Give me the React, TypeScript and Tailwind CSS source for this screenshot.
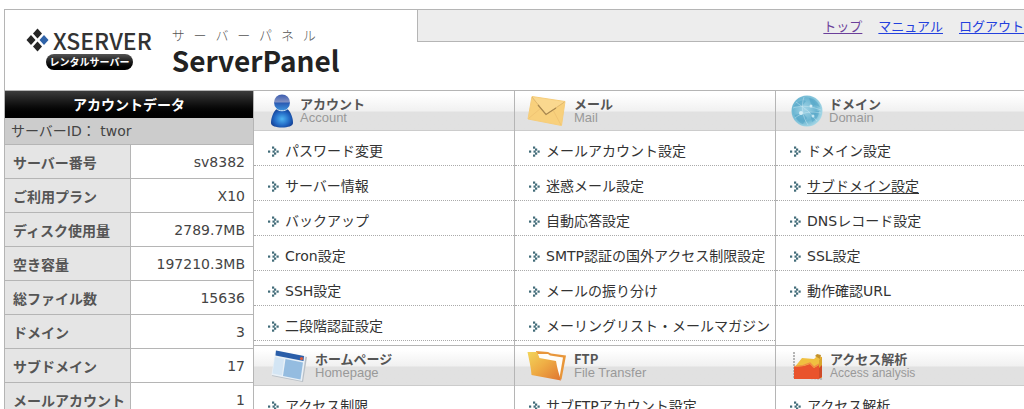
import React from 'react';

type Row = { label: string; value: string };
type Section = { title: string; sub: string; icon: React.ReactNode; pad: string; subStyle: string; links: string[] };

const accountRows: Row[] = [
    { label: 'サーバー番号', value: 'sv8382' },
    { label: 'ご利用プラン', value: 'X10' },
    { label: 'ディスク使用量', value: '2789.7MB' },
    { label: '空き容量', value: '197210.3MB' },
    { label: '総ファイル数', value: '15636' },
    { label: 'ドメイン', value: '3' },
    { label: 'サブドメイン', value: '17' },
    { label: 'メールアカウント', value: '1' },
];

const AccountIcon = () => (
    <svg width="24" height="36" viewBox="0 0 24 36" className="shrink-0" aria-hidden="true">
        <defs>
            <radialGradient id="body" cx="50%" cy="55%" r="58%">
                <stop offset="0" stopColor="#4fb4f2" />
                <stop offset="0.6" stopColor="#2268c4" />
                <stop offset="1" stopColor="#123a8c" />
            </radialGradient>
            <linearGradient id="head" x1="0" y1="0" x2="0" y2="1">
                <stop offset="0" stopColor="#3a5cb0" />
                <stop offset="0.45" stopColor="#8190c2" />
                <stop offset="0.55" stopColor="#2b5db5" />
                <stop offset="1" stopColor="#3e93dd" />
            </linearGradient>
        </defs>
        <path d="M7 15.500C3 19 1 25 1 30c0 3 5 4.500 11 4.500S23 33 23 30c0-5-2-11-6-14.500-3 1.500-7 1.500-10 0z" fill="url(#body)" />
        <circle cx="12" cy="9.500" r="8" fill="url(#head)" />
        <path d="M6 15.500c3 3 9 3 12 0" fill="none" stroke="#d5ebfa" strokeWidth="1" />
    </svg>
);

const MailIcon = () => (
    <svg width="40" height="32" viewBox="0 0 40 32" className="shrink-0" aria-hidden="true">
        <path d="M5 1.500L38 6.500 34.500 30.500 1 24z" fill="#f8d07c" stroke="#f6cd7b" strokeWidth="1" />
        <path d="M1.500 23.500L14 13M34 30L26.500 16" stroke="#f0c473" strokeWidth="1" />
        <path d="M5 2L19 19.500 37.500 7z" fill="#fad88f" />
        <path d="M5 2L19 19.500 37.500 7" fill="none" stroke="#d9b066" strokeWidth="0.800" />
        <path d="M11 10L19 19.500 29 13" fill="none" stroke="#a98850" strokeWidth="1.200" />
    </svg>
);

const DomainIcon = () => (
    <svg width="32" height="32" viewBox="0 0 32 32" className="shrink-0" aria-hidden="true">
        <defs>
            <radialGradient id="globe" cx="42%" cy="45%" r="58%">
                <stop offset="0" stopColor="#a3d4e6" />
                <stop offset="0.65" stopColor="#6cb6d2" />
                <stop offset="1" stopColor="#a5d7e6" />
            </radialGradient>
        </defs>
        <circle cx="16" cy="16" r="15.500" fill="url(#globe)" />
        <path d="M3 11c4-5 9-7 12-5l-4 5-5 1zM18 3c5 0 9 4 11 9l-5-2-3 2zM4 20l8-2 4 5-4 6c-4-1-7-5-8-9zM19 17l9-1c0 5-3 9-7 11z" fill="#4ba0c4" opacity="0.500" />
        <path d="M2 13c8-3 18-2 28 2M4 23c7-6 16-7 26-5M13 2c-3 9-2 19 4 28M5 7l12 9 9 10" fill="none" stroke="#d9f0f7" strokeWidth="0.800" opacity="0.500" />
        <circle cx="10" cy="18" r="2" fill="#d5eef6" />
        <circle cx="20" cy="11" r="1.500" fill="#d5eef6" />
        <circle cx="22" cy="21" r="1.500" fill="#c4e6f1" />
    </svg>
);

const HomepageIcon = () => (
    <svg width="36" height="34" viewBox="0 0 36 34" className="shrink-0" aria-hidden="true">
        <path d="M5 2L36 8 32 33 1 27z" fill="#b8bfc6" />
        <path d="M4.500 1.500L34.500 7.500 31 32 0.500 26z" fill="#e8f0f7" />
        <path d="M5 1.500L33 7 32.500 12 4.500 6.500z" fill="#2a5ea9" />
        <circle cx="30.500" cy="9.500" r="1.600" fill="#e05a3a" />
        <path d="M4 8L13 10 11 26.500 1.500 24.500z" fill="#d3e5f4" />
        <path d="M14.500 10L32 13.500 29.500 30.500 12 27z" fill="#94bce0" />
    </svg>
);

const FtpIcon = () => (
    <svg width="40" height="32" viewBox="0 0 40 32" className="shrink-0" aria-hidden="true">
        <defs>
            <linearGradient id="folder" x1="0" y1="0" x2="1" y2="1">
                <stop offset="0" stopColor="#f2d55c" />
                <stop offset="0.45" stopColor="#efae45" />
                <stop offset="1" stopColor="#df7430" />
            </linearGradient>
        </defs>
        <path d="M9 1l12 1 3 1.500 15 2-4.500 24L12 22z" fill="#e8963a" />
        <path d="M11 4l10 0 2 1.500 13 2-3.500 20-20-8z" fill="#fffdf8" />
        <path d="M0.500 2l9.500 0 2.500 6L29 11c1 7 3 13 5 19.500L4.500 25C4 17 2 10 0.500 2z" fill="url(#folder)" />
    </svg>
);

const AnalysisIcon = () => (
    <svg width="32" height="30" viewBox="0 0 32 30" className="shrink-0" aria-hidden="true">
        <path d="M2 1v25l29 2" fill="none" stroke="#b5b5b5" strokeWidth="2" strokeDasharray="2 1" />
        <path d="M2 17L10 7l12 1 3-3 5 1v21l-28-1z" fill="#f0c040" />
        <path d="M23 5l2-2 4 1-1 4z" fill="#c4922b" />
        <path d="M2 16l10-1 6-2 4 4 5-3v14H2z" fill="#e9532c" />
        <path d="M2 15.500l9-1 7-2.500 4 4 5-3" fill="none" stroke="#f08a47" strokeWidth="1.200" />
        <path d="M27 13l3-7v20l-3 2z" fill="#cf4a28" />
        <path d="M27 9l3-3v8l-3 3z" fill="#d9a52e" />
    </svg>
);

const sections: Section[] = [
    {
        title: 'アカウント',
        sub: 'Account',
        icon: <AccountIcon />,
        pad: 'pl-4 gap-1.5',
        subStyle: 'text-[13px]',
        links: ['パスワード変更', 'サーバー情報', 'バックアップ', 'Cron設定', 'SSH設定', '二段階認証設定'],
    },
    {
        title: 'メール',
        sub: 'Mail',
        icon: <MailIcon />,
        pad: 'pl-3 gap-[7px]',
        subStyle: 'text-[13px]',
        links: ['メールアカウント設定', '迷惑メール設定', '自動応答設定', 'SMTP認証の国外アクセス制限設定', 'メールの振り分け', 'メーリングリスト・メールマガジン'],
    },
    {
        title: 'ドメイン',
        sub: 'Domain',
        icon: <DomainIcon />,
        pad: 'pl-[15px] gap-1.5',
        subStyle: 'text-[13px]',
        links: ['ドメイン設定', 'サブドメイン設定', 'DNSレコード設定', 'SSL設定', '動作確認URL'],
    },
    { title: 'ホームページ', sub: 'Homepage', icon: <HomepageIcon />, pad: 'pl-[17px] gap-2', subStyle: 'text-[13px]', links: ['アクセス制限'] },
    { title: 'FTP', sub: 'File Transfer', icon: <FtpIcon />, pad: 'pl-3 gap-[7px]', subStyle: 'text-[13px]', links: ['サブFTPアカウント設定'] },
    { title: 'アクセス解析', sub: 'Access analysis', icon: <AnalysisIcon />, pad: 'pl-4 gap-1.5', subStyle: 'text-[12px]', links: ['アクセス解析'] },
];

const Bullet = () => (
    <svg width="11" height="11" viewBox="0 0 11 11" className="shrink-0" fill="#416b78" aria-hidden="true">
        <rect x="0" y="4.500" width="2.200" height="2.200" />
        <rect x="4" y="0.500" width="2.200" height="2.200" />
        <rect x="6" y="2.500" width="2.200" height="2.200" />
        <rect x="8.500" y="4.500" width="2.200" height="2.200" />
        <rect x="6" y="6.500" width="2.200" height="2.200" />
        <rect x="4" y="8.500" width="2.200" height="2.200" />
        <rect x="4.500" y="4.500" width="2.200" height="2.200" />
    </svg>
);

const Logo = () => (
    <div className="flex flex-col gap-0.5 pt-[18px]">
        <div className="flex items-center gap-1">
            <svg width="23" height="24" viewBox="0 0 23 24" aria-hidden="true">
                <path d="M11.500 0.500l4.500 5-4.500 5-4.500-5z" fill="#262626" />
                <path d="M5 7l4.500 5L5 17 0.500 12z" fill="#262626" />
                <path d="M18 7l4.500 5-4.500 5-4.500-5z" fill="#2f63a8" />
                <path d="M11.500 13.500l4.500 5-4.500 5-4.500-5z" fill="#262626" />
            </svg>
            <span className="text-[23px] leading-6 font-medium text-[#333]">XSERVER</span>
        </div>
        <span className="ml-5 flex h-4 w-[87px] items-center justify-center rounded-full bg-linear-to-b from-[#555] to-black text-[10px] leading-4 font-bold text-white">
            レンタルサーバー
        </span>
    </div>
);

const SectionPanel: React.FC<Section> = ({ title, sub, icon, pad, subStyle, links }) => (
    <section className="border-b border-[#b5b5b5] pb-1 not-nth-[3n]:border-r">
        <div className={`flex h-10 items-center border-b border-[#ccc] bg-linear-to-b from-white from-10% via-[#f1f1f1] via-50% to-[#e1e1e1] to-55% ${pad}`}>
            {icon}
            <div>
                <h2 className="text-[13px] leading-[14px] font-bold text-[#555]">{title}</h2>
                <p className={`font-['Liberation_Sans','Noto_Sans_CJK_JP',sans-serif] leading-[14px] text-[#999] ${subStyle}`}>{sub}</p>
            </div>
        </div>
        <ul>
            {links.map((link) => (
                <li key={link} className="flex h-[35px] items-center gap-1.5 border-b border-dotted border-[#aaa] pt-1.5 pl-3.5">
                    <Bullet />
                    <a
                        href="#"
                        className={`font-['DejaVu_Sans','Noto_Sans_CJK_JP',sans-serif] text-[14px] leading-5 whitespace-nowrap text-[#333] hover:underline ${link === 'サブドメイン設定' ? 'underline underline-offset-2' : ''}`}
                    >
                        {link}
                    </a>
                </li>
            ))}
        </ul>
    </section>
);

export default function App() {
    return (
        <div className="h-screen overflow-hidden bg-white pt-[9px] pl-1 font-['Noto_Sans_CJK_JP',sans-serif]">
            <div className="border-t border-l border-[#b5b5b5]">
                <header className="flex h-[81px] items-start border-b border-[#b5b5b5]">
                    <div className="flex w-[412px] shrink-0 pl-[21px]">
                        <Logo />
                        <div className="pt-4 pl-5">
                            <p className="flex w-36 justify-between text-[13px] leading-[18px] font-light text-[#555]">
                                {[...'サーバーパネル'].map((char, i) => (
                                    <span key={i}>{char}</span>
                                ))}
                            </p>
                            <h1 className="text-[28px] leading-8 font-bold text-[#222]">ServerPanel</h1>
                        </div>
                    </div>
                    <nav className="flex h-8 flex-1 items-center justify-end gap-4 border-b border-l border-[#b5b5b5] bg-[#ededed] text-[13px] leading-5 whitespace-nowrap text-[#2340dd]">
                        <a href="#" className="text-[#6b3f9a] underline underline-offset-2">トップ</a>
                        <a href="#" className="underline underline-offset-2">マニュアル</a>
                        <a href="#" className="underline underline-offset-2">ログアウト</a>
                    </nav>
                </header>

                <div className="flex items-start">
                    <aside className="w-[249px] shrink-0 border-r border-[#b5b5b5] text-[14px] leading-5 text-[#444]">
                        <h2 className="bg-linear-to-b from-[#3c3c3c] to-black py-1 text-center text-[14px] leading-[19px] font-bold text-white">
                            アカウントデータ
                        </h2>
                        <p className="bg-[#ccc] px-1.5 py-[3px] font-['DejaVu_Sans','Noto_Sans_CJK_JP',sans-serif]">サーバーID： twor</p>
                        <table className="w-full">
                            <tbody>
                                {accountRows.map(({ label, value }) => (
                                    <tr key={label} className="h-[34px] border-t border-[#b5b5b5]">
                                        <th scope="row" className="w-[125px] border-r border-[#b5b5b5] bg-[#e5e5e5] pl-2 text-left font-bold whitespace-nowrap text-[#555]">
                                            {label}
                                        </th>
                                        <td className="pr-2 text-right font-['DejaVu_Sans',sans-serif]">{value}</td>
                                    </tr>
                                ))}
                            </tbody>
                        </table>
                    </aside>
                    <main className="grid flex-1 grid-cols-[261px_261px_minmax(0,1fr)]">
                        {sections.map((section) => (
                            <SectionPanel key={section.title} {...section} />
                        ))}
                    </main>
                </div>
            </div>
        </div>
    );
}
